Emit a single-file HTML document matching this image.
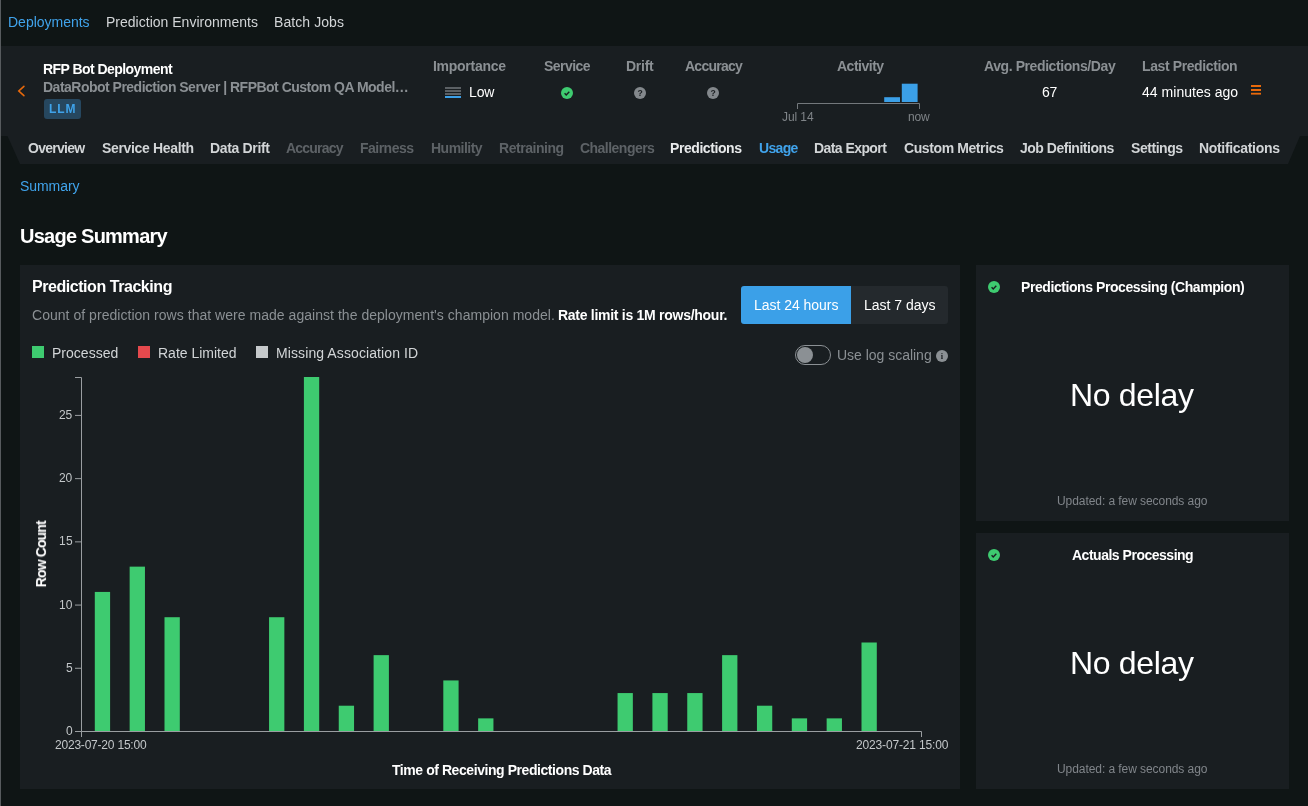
<!DOCTYPE html>
<html lang="en">
<head>
<meta charset="utf-8">
<title>Deployments - Usage</title>
<style>
html,body{margin:0;padding:0;}
body{width:1308px;height:806px;overflow:hidden;background:#0f1515;font-family:"Liberation Sans",Arial,sans-serif;position:relative;}
.t{position:absolute;white-space:nowrap;line-height:1;display:block;will-change:transform;}
.box{position:absolute;}
svg{position:absolute;left:0;top:0;overflow:visible;will-change:transform;}
</style>
</head>
<body>
<div class="box" style="left:0;top:0;width:1px;height:806px;background:#575b5e;"></div>
<div class="box" style="left:1px;top:46px;width:1307px;height:90px;background:#191e21;"></div>
<div class="box" style="left:1px;top:136px;width:1307px;height:28px;background:#191e21;clip-path:polygon(6.5px 0,1299px 0,1287px 28px,19px 28px);"></div>
<div class="box" style="left:20px;top:265px;width:940px;height:524px;background:#191e21;"></div>
<div class="box" style="left:976px;top:265px;width:313px;height:256px;background:#191e21;"></div>
<div class="box" style="left:976px;top:533px;width:313px;height:256px;background:#191e21;"></div>
<div class="box" style="left:44px;top:99px;width:37px;height:20px;background:#26475f;border-radius:3px;"></div>
<div class="box" style="left:741px;top:286px;width:110px;height:38px;background:#3ba0e8;border-radius:3px 0 0 3px;"></div>
<div class="box" style="left:851px;top:286px;width:97px;height:38px;background:#24292d;border-radius:0 3px 3px 0;"></div>
<div class="box" style="left:32px;top:346px;width:12px;height:12px;background:#3ecb70;"></div>
<div class="box" style="left:138px;top:346px;width:12px;height:12px;background:#e5494d;"></div>
<div class="box" style="left:256px;top:346px;width:12px;height:12px;background:#c5c9cb;"></div>
<div class="box" style="left:795px;top:345px;width:34px;height:18px;border:1px solid #8b9094;border-radius:10px;"></div>
<div class="box" style="left:797px;top:347px;width:16px;height:16px;border-radius:8px;background:#8b9094;"></div>
<svg width="1308" height="806" viewBox="0 0 1308 806">
<path d="M23.9 86.3 L18.8 91 L23.9 95.7" fill="none" stroke="#e8690b" stroke-width="1.6" stroke-linecap="round"/>
<rect x="445" y="87" width="16" height="2" fill="#5b6064"/>
<rect x="445" y="90" width="16" height="2" fill="#5b6064"/>
<rect x="445" y="93" width="16" height="2" fill="#5b6064"/>
<rect x="445" y="96" width="16" height="2" fill="#3ba0e8"/>
<circle cx="567" cy="93" r="6" fill="#3ecb70"/><path d="M564.6 93.3 l1.6 1.6 l3.1 -3.1" fill="none" stroke="#1a1e21" stroke-width="1.4"/>
<circle cx="994" cy="287" r="6" fill="#3ecb70"/><path d="M991.6 287.3 l1.6 1.6 l3.1 -3.1" fill="none" stroke="#1a1e21" stroke-width="1.4"/>
<circle cx="994" cy="555" r="6" fill="#3ecb70"/><path d="M991.6 555.3 l1.6 1.6 l3.1 -3.1" fill="none" stroke="#1a1e21" stroke-width="1.4"/>
<circle cx="640" cy="93" r="6" fill="#83888c"/><text x="640" y="96.1" font-size="8.6" font-weight="700" fill="#1a1e21" text-anchor="middle" font-family="Liberation Sans, sans-serif">?</text>
<circle cx="713" cy="93" r="6" fill="#83888c"/><text x="713" y="96.1" font-size="8.6" font-weight="700" fill="#1a1e21" text-anchor="middle" font-family="Liberation Sans, sans-serif">?</text>
<circle cx="942" cy="356" r="6" fill="#8b9094"/><text x="942" y="359" font-size="8.5" font-weight="700" fill="#1a1e21" text-anchor="middle" font-family="Liberation Serif, serif">i</text>
<path d="M797.5 109 V103.5 H919.5 V109" fill="none" stroke="#73787c" stroke-width="1"/>
<rect x="884.2" y="97.2" width="15.8" height="4.8" fill="#3ba0e8"/>
<rect x="901.8" y="83.7" width="15.8" height="18.3" fill="#3ba0e8"/>
<rect x="1251" y="85" width="10" height="2" fill="#e8690b"/>
<rect x="1251" y="89" width="10" height="2" fill="#e8690b"/>
<rect x="1251" y="92.8" width="10" height="1.8" fill="#e8690b"/>
<path d="M75 377.5 H81.5 V731.5 H921.5 V737" fill="none" stroke="#9a9ea1" stroke-width="1"/>
<path d="M81.5 731.5 V737" fill="none" stroke="#9a9ea1" stroke-width="1"/>
<path d="M75 731.5 H81.5" stroke="#9a9ea1" stroke-width="1"/>
<path d="M75 668.28 H81.5" stroke="#9a9ea1" stroke-width="1"/>
<path d="M75 605.07 H81.5" stroke="#9a9ea1" stroke-width="1"/>
<path d="M75 541.86 H81.5" stroke="#9a9ea1" stroke-width="1"/>
<path d="M75 478.64 H81.5" stroke="#9a9ea1" stroke-width="1"/>
<path d="M75 415.42 H81.5" stroke="#9a9ea1" stroke-width="1"/>
<rect x="94.80" y="591.93" width="15.3" height="139.07" fill="#3ecb70"/>
<rect x="129.65" y="566.64" width="15.3" height="164.36" fill="#3ecb70"/>
<rect x="164.50" y="617.21" width="15.3" height="113.79" fill="#3ecb70"/>
<rect x="269.05" y="617.21" width="15.3" height="113.79" fill="#3ecb70"/>
<rect x="303.90" y="377.00" width="15.3" height="354.00" fill="#3ecb70"/>
<rect x="338.75" y="705.71" width="15.3" height="25.29" fill="#3ecb70"/>
<rect x="373.60" y="655.14" width="15.3" height="75.86" fill="#3ecb70"/>
<rect x="443.30" y="680.43" width="15.3" height="50.57" fill="#3ecb70"/>
<rect x="478.15" y="718.36" width="15.3" height="12.64" fill="#3ecb70"/>
<rect x="617.55" y="693.07" width="15.3" height="37.93" fill="#3ecb70"/>
<rect x="652.40" y="693.07" width="15.3" height="37.93" fill="#3ecb70"/>
<rect x="687.25" y="693.07" width="15.3" height="37.93" fill="#3ecb70"/>
<rect x="722.10" y="655.14" width="15.3" height="75.86" fill="#3ecb70"/>
<rect x="756.95" y="705.71" width="15.3" height="25.29" fill="#3ecb70"/>
<rect x="791.80" y="718.36" width="15.3" height="12.64" fill="#3ecb70"/>
<rect x="826.65" y="718.36" width="15.3" height="12.64" fill="#3ecb70"/>
<rect x="861.50" y="642.50" width="15.3" height="88.50" fill="#3ecb70"/>
</svg>
<nav>
<span class="t" id="t0" style="left:8.00px;top:15.15px;font-size:14px;font-weight:400;color:#40a3eb;letter-spacing:-0.010px;">Deployments</span>
<span class="t" id="t1" style="left:106.00px;top:15.15px;font-size:14px;font-weight:400;color:#d2d5d7;letter-spacing:0.009px;">Prediction Environments</span>
<span class="t" id="t2" style="left:274.00px;top:15.15px;font-size:14px;font-weight:400;color:#d2d5d7;letter-spacing:0.078px;">Batch Jobs</span>
</nav>
<header>
<span class="t" id="t3" style="left:43.00px;top:62.15px;font-size:14px;font-weight:700;color:#ffffff;letter-spacing:-0.552px;">RFP Bot Deployment</span>
<span class="t" id="t4" style="left:43.00px;top:79.85px;font-size:14px;font-weight:700;color:#8b9094;letter-spacing:-0.510px;">DataRobot Prediction Server | RFPBot Custom QA Model…</span>
<span class="t" id="t5" style="left:49.00px;top:102.94px;font-size:12px;font-weight:700;color:#3fa3ea;letter-spacing:0.916px;">LLM</span>
<span class="t" id="t6" style="left:433.00px;top:58.95px;font-size:14px;font-weight:700;color:#8b9094;letter-spacing:-0.271px;">Importance</span>
<span class="t" id="t7" style="left:544.00px;top:58.95px;font-size:14px;font-weight:700;color:#8b9094;letter-spacing:-0.536px;">Service</span>
<span class="t" id="t8" style="left:626.00px;top:58.95px;font-size:14px;font-weight:700;color:#8b9094;letter-spacing:-0.268px;">Drift</span>
<span class="t" id="t9" style="left:685.00px;top:58.95px;font-size:14px;font-weight:700;color:#8b9094;letter-spacing:-0.744px;">Accuracy</span>
<span class="t" id="t10" style="left:837.00px;top:58.95px;font-size:14px;font-weight:700;color:#8b9094;letter-spacing:-0.496px;">Activity</span>
<span class="t" id="t11" style="left:984.00px;top:58.95px;font-size:14px;font-weight:700;color:#8b9094;letter-spacing:-0.411px;">Avg. Predictions/Day</span>
<span class="t" id="t12" style="left:1142.00px;top:58.95px;font-size:14px;font-weight:700;color:#8b9094;letter-spacing:-0.393px;">Last Prediction</span>
<span class="t" id="t13" style="left:469.00px;top:85.35px;font-size:14px;font-weight:400;color:#ffffff;letter-spacing:-0.120px;">Low</span>
<span class="t" id="t14" style="left:1042.00px;top:85.25px;font-size:14px;font-weight:400;color:#ffffff;letter-spacing:-0.235px;">67</span>
<span class="t" id="t15" style="left:1142.00px;top:85.25px;font-size:14px;font-weight:400;color:#ffffff;letter-spacing:0.030px;">44 minutes ago</span>
<span class="t" id="t16" style="left:782.00px;top:110.74px;font-size:12px;font-weight:400;color:#7f8488;letter-spacing:-0.088px;">Jul 14</span>
<span class="t" id="t17" style="left:908.00px;top:110.74px;font-size:12px;font-weight:400;color:#7f8488;letter-spacing:-0.204px;">now</span>
</header>
<nav>
<span class="t" id="t18" style="left:28.00px;top:141.15px;font-size:14px;font-weight:700;color:#d2d5d7;letter-spacing:-0.715px;">Overview</span>
<span class="t" id="t19" style="left:102.00px;top:141.15px;font-size:14px;font-weight:700;color:#d2d5d7;letter-spacing:-0.337px;">Service Health</span>
<span class="t" id="t20" style="left:210.00px;top:141.15px;font-size:14px;font-weight:700;color:#d2d5d7;letter-spacing:-0.342px;">Data Drift</span>
<span class="t" id="t21" style="left:286.00px;top:141.15px;font-size:14px;font-weight:700;color:#5d6266;letter-spacing:-0.797px;">Accuracy</span>
<span class="t" id="t22" style="left:360.00px;top:141.15px;font-size:14px;font-weight:700;color:#5d6266;letter-spacing:-0.515px;">Fairness</span>
<span class="t" id="t23" style="left:431.00px;top:141.15px;font-size:14px;font-weight:700;color:#5d6266;letter-spacing:-0.512px;">Humility</span>
<span class="t" id="t24" style="left:499.00px;top:141.15px;font-size:14px;font-weight:700;color:#5d6266;letter-spacing:-0.451px;">Retraining</span>
<span class="t" id="t25" style="left:580.00px;top:141.15px;font-size:14px;font-weight:700;color:#5d6266;letter-spacing:-0.527px;">Challengers</span>
<span class="t" id="t26" style="left:670.00px;top:141.15px;font-size:14px;font-weight:700;color:#e8eaeb;letter-spacing:-0.428px;">Predictions</span>
<span class="t" id="t27" style="left:759.00px;top:141.15px;font-size:14px;font-weight:700;color:#40a3eb;letter-spacing:-0.666px;">Usage</span>
<span class="t" id="t28" style="left:814.00px;top:141.15px;font-size:14px;font-weight:700;color:#d2d5d7;letter-spacing:-0.567px;">Data Export</span>
<span class="t" id="t29" style="left:904.00px;top:141.15px;font-size:14px;font-weight:700;color:#d2d5d7;letter-spacing:-0.400px;">Custom Metrics</span>
<span class="t" id="t30" style="left:1020.00px;top:141.15px;font-size:14px;font-weight:700;color:#d2d5d7;letter-spacing:-0.482px;">Job Definitions</span>
<span class="t" id="t31" style="left:1131.00px;top:141.15px;font-size:14px;font-weight:700;color:#d2d5d7;letter-spacing:-0.448px;">Settings</span>
<span class="t" id="t32" style="left:1199.00px;top:141.15px;font-size:14px;font-weight:700;color:#d2d5d7;letter-spacing:-0.320px;">Notifications</span>
</nav>
<main>
<span class="t" id="t33" style="left:20.00px;top:179.15px;font-size:14px;font-weight:400;color:#40a3eb;letter-spacing:-0.061px;">Summary</span>
<span class="t" id="t34" style="left:20.00px;top:226.07px;font-size:20px;font-weight:700;color:#ffffff;letter-spacing:-0.756px;">Usage Summary</span>
<span class="t" id="t35" style="left:32.00px;top:278.66px;font-size:16px;font-weight:700;color:#ffffff;letter-spacing:-0.448px;">Prediction Tracking</span>
<span class="t" id="t36" style="left:32.00px;top:308.25px;font-size:14px;font-weight:400;color:#8b9094;letter-spacing:0.034px;">Count of prediction rows that were made against the deployment's champion model.</span>
<span class="t" id="t37" style="left:558.00px;top:308.25px;font-size:14px;font-weight:700;color:#ffffff;letter-spacing:-0.276px;">Rate limit is 1M rows/hour.</span>
<span class="t" id="t38" style="left:754.00px;top:298.45px;font-size:14px;font-weight:400;color:#ffffff;letter-spacing:-0.036px;">Last 24 hours</span>
<span class="t" id="t39" style="left:864.00px;top:298.45px;font-size:14px;font-weight:400;color:#ffffff;letter-spacing:-0.002px;">Last 7 days</span>
<span class="t" id="t40" style="left:52.00px;top:345.85px;font-size:14px;font-weight:400;color:#d2d5d7;letter-spacing:0.016px;">Processed</span>
<span class="t" id="t41" style="left:158.00px;top:345.85px;font-size:14px;font-weight:400;color:#d2d5d7;letter-spacing:-0.001px;">Rate Limited</span>
<span class="t" id="t42" style="left:276.00px;top:345.85px;font-size:14px;font-weight:400;color:#d2d5d7;letter-spacing:0.099px;">Missing Association ID</span>
<span class="t" id="t43" style="left:837.00px;top:348.15px;font-size:14px;font-weight:400;color:#8b9094;letter-spacing:-0.019px;">Use log scaling</span>
<span class="t" id="t44" style="left:392.00px;top:762.95px;font-size:14px;font-weight:700;color:#ffffff;letter-spacing:-0.434px;">Time of Receiving Predictions Data</span>
<span class="t" id="t45" style="left:1021.00px;top:280.35px;font-size:14px;font-weight:700;color:#ffffff;letter-spacing:-0.424px;">Predictions Processing (Champion)</span>
<span class="t" id="t46" style="left:1072.00px;top:548.35px;font-size:14px;font-weight:700;color:#ffffff;letter-spacing:-0.486px;">Actuals Processing</span>
<span class="t" id="t47" style="left:1070.00px;top:378.61px;font-size:32px;font-weight:400;color:#ffffff;letter-spacing:-0.339px;">No delay</span>
<span class="t" id="t48" style="left:1070.00px;top:646.61px;font-size:32px;font-weight:400;color:#ffffff;letter-spacing:-0.339px;">No delay</span>
<span class="t" id="t49" style="left:1057.00px;top:495.24px;font-size:12px;font-weight:400;color:#80858a;letter-spacing:-0.066px;">Updated: a few seconds ago</span>
<span class="t" id="t50" style="left:1057.00px;top:763.24px;font-size:12px;font-weight:400;color:#80858a;letter-spacing:-0.066px;">Updated: a few seconds ago</span>
<span class="t" id="t51" style="left:55.00px;top:739.14px;font-size:12px;font-weight:400;color:#c3c7c9;letter-spacing:-0.208px;">2023-07-20 15:00</span>
<span class="t" id="t52" style="left:856.00px;top:739.14px;font-size:12px;font-weight:400;color:#c3c7c9;letter-spacing:-0.150px;">2023-07-21 15:00</span>
<span class="t" id="t53" style="left:66.00px;top:724.94px;font-size:12px;font-weight:400;color:#c3c7c9;">0</span>
<span class="t" id="t54" style="left:66.00px;top:661.73px;font-size:12px;font-weight:400;color:#c3c7c9;">5</span>
<span class="t" id="t55" style="left:59.00px;top:598.51px;font-size:12px;font-weight:400;color:#c3c7c9;letter-spacing:0.192px;">10</span>
<span class="t" id="t56" style="left:59.00px;top:535.30px;font-size:12px;font-weight:400;color:#c3c7c9;letter-spacing:0.406px;">15</span>
<span class="t" id="t57" style="left:59.00px;top:472.08px;font-size:12px;font-weight:400;color:#c3c7c9;letter-spacing:-0.290px;">20</span>
<span class="t" id="t58" style="left:59.00px;top:408.87px;font-size:12px;font-weight:400;color:#c3c7c9;letter-spacing:-0.100px;">25</span>
<span class="t" id="rc" style="left:0;top:0;font-size:14px;font-weight:700;color:#fff;transform-origin:0 0;transform:translate(45.9px,587.3px) rotate(-90deg) translate(0,-11.85px);letter-spacing:-0.884px;">Row Count</span>
</main>
</body>
</html>
